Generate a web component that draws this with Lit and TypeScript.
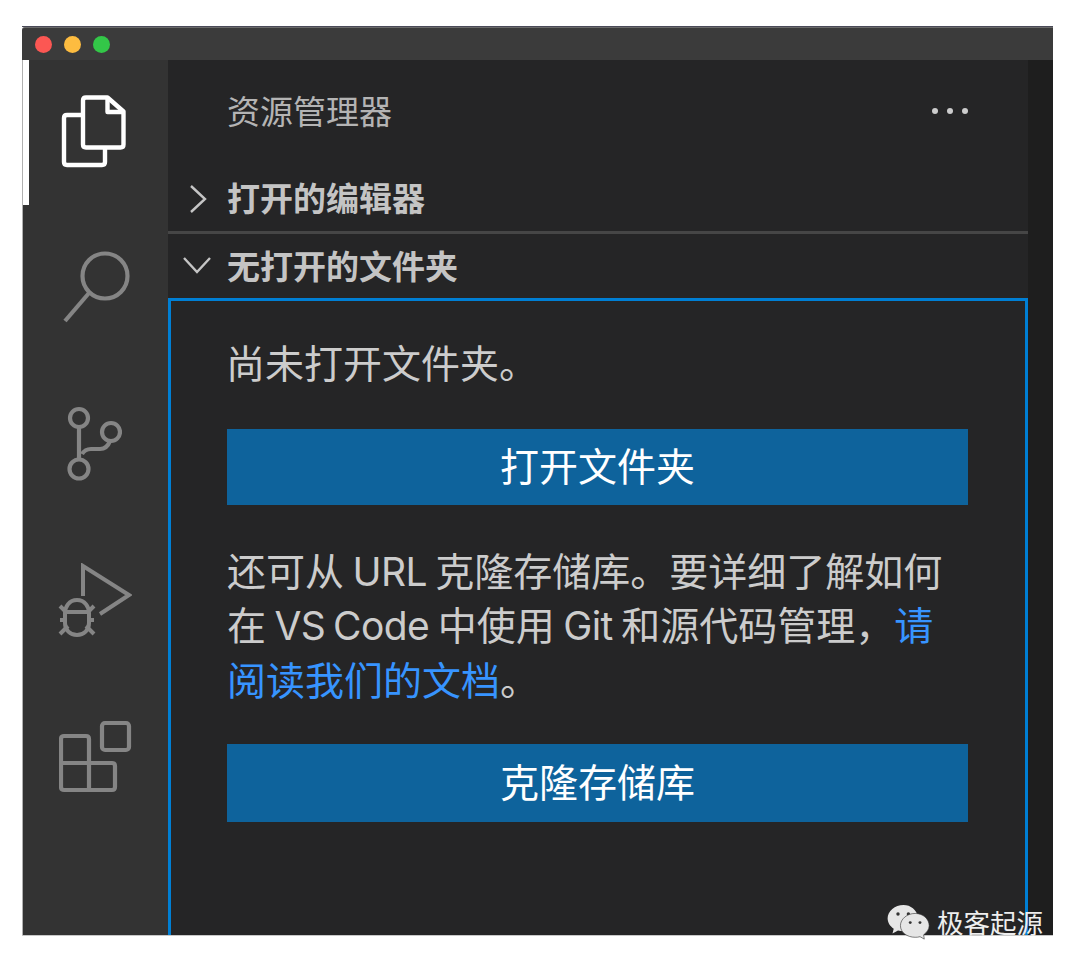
import { LitElement, css, html } from 'lit'
import { customElement } from 'lit/decorators.js'

@customElement('app-root')
export class AppRoot extends LitElement {
  render() {
    return html`
      <div class="window">
        <div class="titlebar">
          <span class="light red"></span>
          <span class="light yellow"></span>
          <span class="light green"></span>
        </div>
        <div class="body">
          <nav class="activity">
            <div class="active-mark"></div>
            <svg class="icon files" width="68" height="74" viewBox="0 0 68 74" fill="none" stroke="#fff" stroke-width="4.4" stroke-linejoin="round">
              <path d="M26 3.500h21.500l16 14v33q0 3 -3 3h-34.500q-3 0 -3 -3v-44q0 -3 3 -3z" />
              <path d="M47.500 3.500v14.500h16" />
              <path d="M23 21h-16q-3 0 -3 3v44q0 3 3 3h35q3 0 3 -3v-14" />
            </svg>
            <svg class="icon search" width="70" height="72" viewBox="0 0 70 72" fill="none" stroke="#858585" stroke-width="4.200">
              <circle cx="42" cy="25" r="22.500" />
              <path d="M26 42l-24 28" />
            </svg>
            <svg class="icon git" width="56" height="76" viewBox="0 0 56 76" fill="none" stroke="#858585" stroke-width="4.200">
              <circle cx="13" cy="12" r="9" />
              <circle cx="45" cy="26" r="9" />
              <circle cx="13" cy="63" r="9.500" />
              <path d="M13 21v32M16 48q3 -5 9 -5h9q7 0 10 -8" />
            </svg>
            <svg class="icon debug" width="74" height="76" viewBox="0 0 74 76" fill="none" stroke="#858585" stroke-width="4">
              <path d="M25 33v-30l46 29l-29 19" />
              <path d="M19 37c-8 0 -12 7 -12 13v10c0 7 5 12 12 12s12 -5 12 -12v-10c0 -6 -4 -13 -12 -13z" />
              <path d="M7 49h24M2 57h7M29 57h7M2 43l7 7M36 43l-7 7M2 71l8 -8M36 71l-8 -8" />
            </svg>
            <svg class="icon ext" width="74" height="74" viewBox="0 0 74 74" fill="none" stroke="#858585" stroke-width="4.200" stroke-linejoin="round">
              <rect x="43" y="3" width="27" height="27" rx="3" />
              <path d="M5 16h22q3 0 3 3v51h-25q-3 0 -3 -3v-48q0 -3 3 -3z" />
              <path d="M2 43h51q3 0 3 3v21q0 3 -3 3h-23" />
            </svg>
          </nav>
          <aside class="sidebar">
            <div class="head">
              <span class="label">资源管理器</span>
              <span class="dots"><i></i><i></i><i></i></span>
            </div>
            <div class="section first">
              <svg class="chev" width="20" height="30" viewBox="0 0 20 30" fill="none" stroke="#c5c5c5" stroke-width="2.400"><path d="M3 2l14 13l-14 13" /></svg>
              <b>打开的编辑器</b>
            </div>
            <div class="section second">
              <svg class="chev" width="30" height="20" viewBox="0 0 30 20" fill="none" stroke="#c5c5c5" stroke-width="2.400"><path d="M2 3l13 14l13 -14" /></svg>
              <b>无打开的文件夹</b>
            </div>
            <div class="welcome">
              <p class="intro">尚未打开文件夹。</p>
              <div class="btn open">打开文件夹</div>
              <p class="para">还可从 <span class="lat">URL</span> 克隆存储库。要详细了解如何在 <span class="lat">VS Code</span> 中使用 <span class="lat">Git</span> 和源代码管理，<a>请阅读我们的文档</a>。</p>
              <div class="btn clone">克隆存储库</div>
            </div>
          </aside>
          <div class="editor"></div>
        </div>
      </div>
      <div class="watermark">
        <svg width="72" height="58" viewBox="0 0 72 58">
          <path d="M27 1c-14 0 -26 10 -26 22c0 7 4 13 10 17l-2 8l9 -5c3 1 6 1 9 1c8 0 28 -10 24 -24c-3 -11 -12 -19 -24 -19z" fill="#e6e6e6" />
          <circle cx="18" cy="16" r="2.800" fill="#333" />
          <circle cx="35" cy="16" r="2.800" fill="#333" />
          <path d="M46 15c-13 0 -24 9 -24 20s11 19 24 19c3 0 5 0 8 -1l7 4l-1 -7c5 -4 9 -9 9 -15c0 -11 -10 -20 -23 -20z" fill="#e6e6e6" stroke="#333" stroke-width="1" />
          <circle cx="38" cy="30" r="2.400" fill="#333" />
          <circle cx="54" cy="30" r="2.400" fill="#333" />
        </svg>
        <span>极客起源</span>
      </div>
    `
  }

  static styles = css`
    :host {
      display: block;
      position: relative;
      height: 972px;
      background: #fff;
      font-family: 'Noto Sans CJK SC', 'Liberation Sans', sans-serif;
    }

    .window {
      position: absolute;
      left: 22px;
      top: 26px;
      width: 1031px;
      height: 908px;
      display: flex;
      flex-direction: column;
      border-top: 1px solid #4a4a58;
      box-shadow: 0 1px 0 #c8c8c8;
    }

    .titlebar {
      height: 33px;
      flex: none;
      display: flex;
      align-items: center;
      gap: 12px;
      padding: 0 13px;
      background: #3b3b3b;
      border-top: 1px solid #6a6a6a;
      border-radius: 3px 0 0 0;
      box-sizing: border-box;
    }

    .light {
      width: 17px;
      height: 17px;
      border-radius: 50%;
    }
    .red { background: #fc5753; }
    .yellow { background: #fdbc40; }
    .green { background: #33c748; }

    .body {
      flex: 1;
      display: flex;
      min-height: 0;
    }

    .activity {
      position: relative;
      width: 146px;
      flex: none;
      background: #333333;
      border-left: 1px solid #b0b0b0;
      box-sizing: border-box;
    }

    .active-mark {
      position: absolute;
      left: 0;
      top: 0;
      width: 6px;
      height: 145px;
      background: #fff;
    }

    .icon {
      position: absolute;
    }
    .files { left: 37px; top: 34px; }
    .search { left: 40px; top: 191px; }
    .git { left: 43px; top: 346px; }
    .debug { left: 35px; top: 503px; }
    .ext { left: 36px; top: 660px; }

    .sidebar {
      width: 860px;
      flex: none;
      display: flex;
      flex-direction: column;
      background: #252526;
      color: #cccccc;
      min-height: 0;
    }

    .head {
      height: 105px;
      flex: none;
      display: flex;
      align-items: center;
      justify-content: space-between;
      padding: 0 60px 3px 59px;
      font-size: 33px;
      color: #b4b4b4;
      box-sizing: border-box;
    }
    .label {
      padding-bottom: 3px;
    }

    .dots {
      display: flex;
      gap: 9px;
    }
    .dots i {
      width: 6px;
      height: 6px;
      border-radius: 50%;
      background: #cccccc;
    }

    .section {
      position: relative;
      flex: none;
      display: flex;
      align-items: center;
      padding-left: 59px;
      font-size: 33px;
      box-sizing: border-box;
    }
    .section b {
      font-weight: 700;
      color: #c4c4c4;
    }
    .section.first {
      height: 69px;
      border-bottom: 3px solid #464646;
    }
    .section.first b {
      padding-bottom: 3px;
    }
    .section.second {
      height: 64px;
    }
    .section.second b {
      padding-bottom: 2px;
    }
    .chev {
      position: absolute;
    }
    .first .chev { left: 20px; top: 19px; }
    .second .chev { left: 14px; top: 21px; }

    .welcome {
      flex: 1;
      border: 3px solid #007fd4;
      border-bottom: none;
      padding: 0 57px 0 56px;
      box-sizing: border-box;
      font-size: 39px;
      color: #cccccc;
    }

    p {
      margin: 0;
    }

    .intro {
      margin-top: 33px;
      margin-left: -1px;
      line-height: 54px;
    }

    .btn {
      display: flex;
      align-items: center;
      justify-content: center;
      padding-bottom: 7px;
      box-sizing: border-box;
      background: #0e639c;
      color: #fff;
    }
    .btn.open {
      height: 76px;
      margin-top: 41px;
    }
    .btn.clone {
      height: 78px;
      margin-top: 39px;
    }

    .para {
      margin-top: 39.500px;
      margin-bottom: -3px;
      line-height: 54.500px;
      font-family: Inter, 'Noto Sans CJK SC', sans-serif;
      word-spacing: -2.500px;
    }
    .para .lat {
      letter-spacing: -0.6px;
    }
    .para a {
      color: #3794ff;
    }

    .editor {
      flex: 1;
      background: #1e1e1e;
    }

    .watermark {
      position: absolute;
      left: 887px;
      top: 902px;
      display: flex;
      align-items: center;
      gap: 6px;
      color: #eeeeee;
      font-size: 26.500px;
      line-height: 40px;
    }
    .watermark svg {
      width: 44px;
      height: 38px;
    }
  `
}
